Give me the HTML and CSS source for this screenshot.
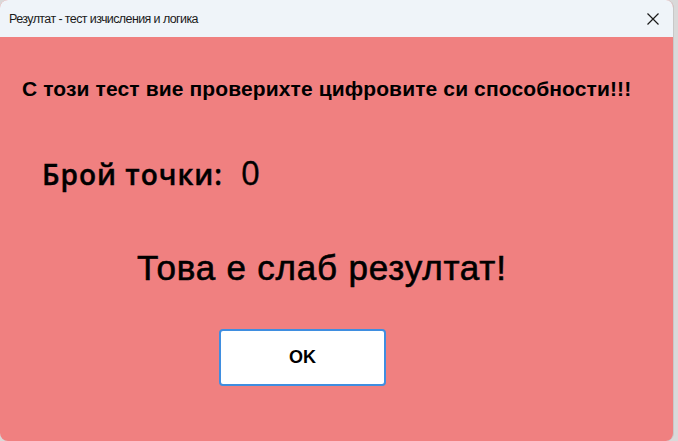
FILE: index.html
```html
<!DOCTYPE html>
<html lang="bg">
<head>
<meta charset="utf-8">
<title>Резултат - тест изчисления и логика</title>
<link rel="stylesheet" href="styles.css">
</head>
<body>
<div class="window">
  <div class="titlebar">
    <span class="title">Резултат - тест изчисления и логика</span>
    <svg class="close" width="12" height="12" viewBox="0 0 12 12"><path d="M0.5 0.5 L11.5 11.5 M11.5 0.5 L0.5 11.5" stroke="#1a1a1a" stroke-width="1.2" fill="none"/></svg>
  </div>
  <div class="content">
    <p class="intro">С този тест вие проверихте цифровите си способности!!!</p>
    <div class="score">
      <span class="label">Брой точки:</span>
      <span class="value">0</span>
    </div>
    <p class="verdict">Това е слаб резултат!</p>
    <button class="ok">OK</button>
  </div>
</div>
</body>
</html>
```
FILE: styles.css
```css
html, body {
  margin: 0;
  padding: 0;
  background: #d9d9d9;
  width: 678px;
  height: 441px;
  overflow: hidden;
}
.window {
  width: 673px;
  height: 441px;
  border-radius: 8px;
  overflow: hidden;
  display: flex;
  flex-direction: column;
  background: #f08080;
  border-right: 1px solid #c8c8c8;
}
.titlebar {
  height: 37px;
  flex: none;
  background: #eff4f9;
  display: flex;
  align-items: center;
  justify-content: space-between;
  padding: 0 14px 0 9px;
}
.title {
  font-family: "Liberation Sans", Arial, sans-serif;
  font-size: 12.5px;
  letter-spacing: -0.6px;
  color: #1a1a1a;
}
.close {
  display: block;
}
.content {
  flex: 1;
  padding: 0 0 0 22px;
}
.intro {
  margin: 40px 0 0 0;
  font-family: "Liberation Sans", Arial, sans-serif;
  font-weight: bold;
  font-size: 21px;
  line-height: 24px;
  letter-spacing: 0.12px;
  color: #000;
}
.score {
  margin: 55px 0 0 20px;
  display: flex;
  gap: 18px;
  align-items: baseline;
  font-family: "Open Sans", sans-serif;
  font-weight: 600;
  font-size: 28px;
  line-height: 34px;
  letter-spacing: 1px;
  color: #000;
  -webkit-text-stroke: 0.4px #000;
}
.value {
  font-weight: 400;
  font-size: 33px;
  letter-spacing: 0;
}
.verdict {
  margin: 57px 0 0 115px;
  font-family: "Liberation Sans", Arial, sans-serif;
  font-size: 35px;
  line-height: 40px;
  letter-spacing: 0.8px;
  color: #000;
  -webkit-text-stroke: 0.6px #000;
}
.ok {
  margin: 41px 0 0 197px;
  width: 167px;
  height: 57px;
  background: #fff;
  border: 2px solid #3f8ee0;
  border-radius: 4px;
  font-family: "Liberation Sans", Arial, sans-serif;
  font-weight: bold;
  font-size: 18px;
  color: #000;
  display: block;
}
```
